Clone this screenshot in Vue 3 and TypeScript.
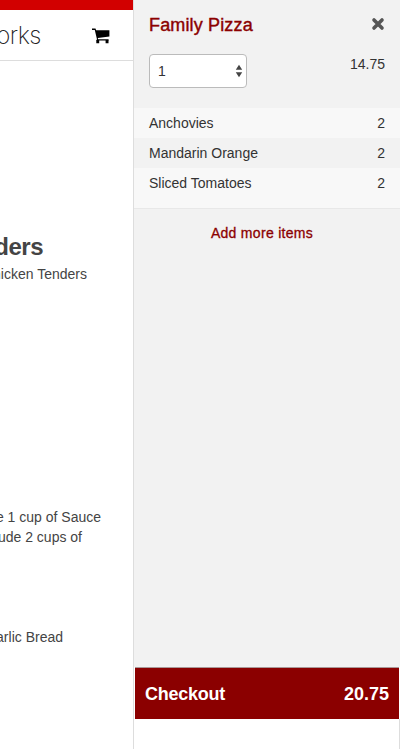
<script setup lang="ts">
import { ref } from 'vue'

interface Topping {
  name: string
  count: number
}

const quantity = ref<number>(1)
const toppings: Topping[] = [
  { name: 'Anchovies', count: 2 },
  { name: 'Mandarin Orange', count: 2 },
  { name: 'Sliced Tomatoes', count: 2 },
]
</script>

<template>
  <div class="screen">
    <main class="page">
      <header class="bar">
        <span class="brand">Works</span>
        <svg class="cart-icon" viewBox="0 0 18 16">
          <path d="M0 .6h3.5l.6 1.7H17.4v6.2L5.8 10l.3 1.2h10.5v1.3H4.6L4.9 11 2.8 1.9H0z" />
          <path d="M4.3 12h2.9v3.2H4.3zM13.6 12h2.9v3.2h-2.9z" />
        </svg>
      </header>
      <section class="item">
        <h2>Tenders</h2>
        <p class="tenders">Chicken Tenders</p>
      </section>
      <section class="sauces">
        <p class="sauce">Include 1 cup of Sauce</p>
        <p class="cups">Include 2 cups of</p>
      </section>
      <p class="bread">Garlic Bread</p>
    </main>

    <aside class="cart">
      <div class="cart-body">
        <div class="title-row">
          <h3>Family Pizza</h3>
          <svg class="close" viewBox="0 0 14 14">
            <path d="M3 3l8 8M11 3l-8 8" />
          </svg>
        </div>
        <div class="price-row">
          <div class="select">
            <span>{{ quantity }}</span>
            <svg viewBox="0 0 8 14">
              <path d="M4 .8L7.2 5.8H.8zM4 13.2L.8 8.2h6.4z" />
            </svg>
          </div>
          <span class="price">14.75</span>
        </div>
        <ul>
          <li v-for="topping in toppings" :key="topping.name">
            <span>{{ topping.name }}</span>
            <span>{{ topping.count }}</span>
          </li>
        </ul>
        <a class="add">Add more items</a>
      </div>
      <div class="checkout">
        <span class="label">Checkout</span>
        <span class="total">20.75</span>
      </div>
      <div class="below"></div>
    </aside>
  </div>
</template>

<style>
body {
  margin: 0;
  background: #fff;
}
</style>

<style scoped>
.screen {
  display: flex;
  width: 400px;
  height: 749px;
  overflow: hidden;
  font: 14px/20px "Liberation Sans", Arial, sans-serif;
  color: #333;
}
h2, h3, p, ul {
  margin: 0;
  padding: 0;
}
.page {
  display: flex;
  flex-direction: column;
  align-items: flex-end;
  width: 133px;
  box-sizing: border-box;
  border-top: 10px solid #d20000;
  overflow: hidden;
  white-space: nowrap;
  color: #444;
}
.bar {
  display: flex;
  justify-content: flex-end;
  align-items: center;
  flex: none;
  width: 233px;
  height: 51px;
  box-sizing: border-box;
  border-bottom: 1px solid #ddd;
  padding-right: 23px;
}
.brand {
  font: 200 24px/48px Inter, "Liberation Sans", sans-serif;
  letter-spacing: -0.5px;
  color: #222;
  margin: 2px 51px 0 0;
}
.cart-icon {
  width: 18px;
  height: 16px;
  fill: #000;
  margin-top: 1px;
}
.item {
  display: flex;
  flex-direction: column;
  align-items: flex-end;
  margin-top: 172px;
}
h2 {
  font-size: 24px;
  line-height: 28px;
  letter-spacing: -0.5px;
  margin-right: 90px;
}
.tenders {
  margin: 3px 46px 0 0;
}
.sauces {
  display: flex;
  flex-direction: column;
  align-items: flex-end;
  margin-top: 223px;
}
.sauce {
  margin-right: 32px;
}
.cups {
  margin-right: 51px;
}
.bread {
  margin: 80px 70px 0 0;
}
.cart {
  display: flex;
  flex-direction: column;
  width: 267px;
  box-sizing: border-box;
  border-left: 1px solid #ddd;
}
.cart-body {
  flex: 1;
  background: #f2f2f2;
}
.title-row {
  display: flex;
  justify-content: space-between;
  align-items: center;
  height: 48px;
  padding: 0 15px;
}
h3 {
  font-size: 18px;
  font-weight: 400;
  line-height: 20px;
  letter-spacing: 0.15px;
  padding-top: 2px;
  color: #8b0000;
  -webkit-text-stroke: 0.4px #8b0000;
}
.close {
  width: 14px;
  height: 14px;
  fill: none;
  stroke: #555;
  stroke-width: 3.6;
  stroke-linecap: round;
}
.price-row {
  display: flex;
  justify-content: space-between;
  height: 54px;
  box-sizing: content-box;
  padding: 6px 15px 0;
}
.select {
  display: flex;
  justify-content: space-between;
  align-items: center;
  width: 98px;
  height: 34px;
  box-sizing: border-box;
  padding: 0 3px 0 8px;
  border: 1px solid #bbb;
  border-radius: 4px;
  background: #fff;
}
.select svg {
  width: 8px;
  height: 14px;
  fill: #444;
}
ul {
  list-style: none;
  border-bottom: 1px solid #e8e8e8;
}
li {
  display: flex;
  justify-content: space-between;
  height: 30px;
  box-sizing: border-box;
  padding: 5px 15px;
}
li:nth-child(odd) {
  background: #f8f8f8;
}
li:last-child {
  height: 40px;
}
.add {
  display: block;
  margin-top: 14px;
  padding-right: 10px;
  text-align: center;
  letter-spacing: 0.3px;
  color: #8b0000;
  -webkit-text-stroke: 0.3px #8b0000;
}
.checkout {
  display: flex;
  justify-content: space-between;
  align-items: center;
  height: 52px;
  box-sizing: border-box;
  margin: 0 1px;
  border-top: 1px solid #a99;
  padding: 0 10px;
  background: #8b0000;
  color: #fff;
  font-size: 18px;
  font-weight: 700;
}
.label {
  letter-spacing: -0.25px;
}
.below {
  height: 30px;
  border-right: 1px solid #ddd;
}
</style>
